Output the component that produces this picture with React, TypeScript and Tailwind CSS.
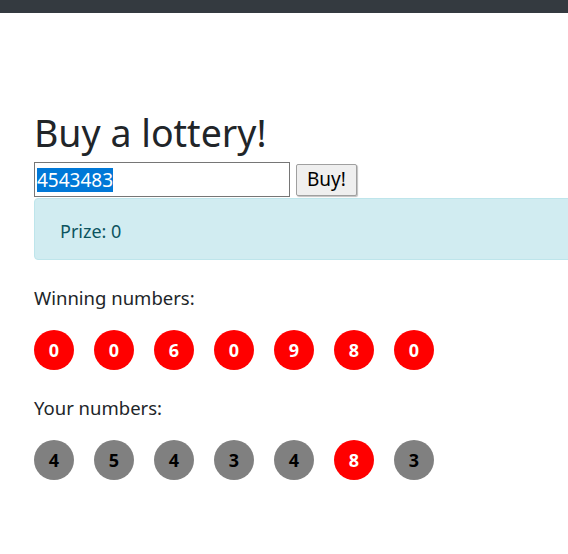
import React from "react";

const winning = [0, 0, 6, 0, 9, 8, 0];
const yours = [4, 5, 4, 3, 4, 8, 3];

const Ball: React.FC<{ value: number; hit: boolean }> = ({ value, hit }) => (
  <div
    className={
      hit
        ? "flex h-10 w-10 items-center justify-center rounded-full bg-[#ff0000] text-[18px] font-bold text-white"
        : "flex h-10 w-10 items-center justify-center rounded-full bg-[#808080] text-[18px] font-bold text-black"
    }
  >
    {value}
  </div>
);

const App: React.FC = () => {
  return (
    <div
      className="min-h-[554px] overflow-hidden bg-white text-[#212529]"
      style={{ fontFamily: '"Segoe UI", "Noto Sans", sans-serif' }}
    >
      {/* top nav */}
      <div className="h-[13px] bg-[#343a40]" />

      <div className="w-[600px] pl-[34px] pt-[96px]">
        <h1 className="mb-[5px] text-[37.5px] leading-[48px]">Buy a lottery!</h1>

        <div className="flex items-center gap-[6px]">
          <div className="flex h-[35px] w-[256px] items-center border border-[#767676] px-[2px]">
            <span className="bg-[#0078d7] text-[19px] leading-[24px] text-white">4543483</span>
          </div>
          <button className="h-[32px] rounded-[2px] border border-[#a0a0a0] bg-[#efefef] px-[10px] text-[19px] leading-none text-black shadow-[1px_1px_1px_rgba(0,0,0,0.25)]">
            Buy!
          </button>
        </div>

        <div className="mt-[1px] flex h-[62px] items-center rounded-[4px] border border-[#bee5eb] bg-[#d1ecf1] px-[25px] pt-[4px] text-[18px] text-[#0c5460]">
          Prize: 0
        </div>

        <div className="mt-[24px] text-[18.5px] leading-[27px]">Winning numbers:</div>
        <div className="mt-[19px] flex gap-[20px]">
          {winning.map((n, i) => (
            <Ball key={i} value={n} hit />
          ))}
        </div>

        <div className="mt-[24px] text-[18.5px] leading-[27px]">Your numbers:</div>
        <div className="mt-[19px] flex gap-[20px]">
          {yours.map((n, i) => (
            <Ball key={i} value={n} hit={n === winning[i]} />
          ))}
        </div>
      </div>
    </div>
  );
};

export default App;
